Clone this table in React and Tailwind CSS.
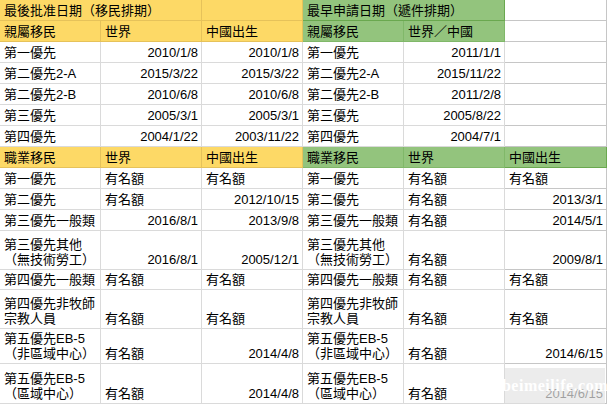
import React from 'react';

const Y = 'bg-[#fdd966]';
const G = 'bg-[#93c47d]';

// each cell: text (string or lines), bg, span
const rows = [
  {
    h: 'h-[21px]',
    cells: [
      { t: '最後批准日期（移民排期）', bg: Y, span: 2 },
      { t: '', bg: Y },
      { t: '最早申請日期（遞件排期）', bg: G, span: 2 },
      { t: '' },
    ],
  },
  {
    h: 'h-[21px]',
    cells: [
      { t: '親屬移民', bg: Y },
      { t: '世界', bg: Y },
      { t: '中國出生', bg: Y },
      { t: '親屬移民', bg: G },
      { t: '世界／中國', bg: G },
      { t: '' },
    ],
  },
  fam('第一優先', '2010/1/8', '2010/1/8', '2011/1/1'),
  fam('第二優先2-A', '2015/3/22', '2015/3/22', '2015/11/22'),
  fam('第二優先2-B', '2010/6/8', '2010/6/8', '2011/2/8'),
  fam('第三優先', '2005/3/1', '2005/3/1', '2005/8/22'),
  fam('第四優先', '2004/1/22', '2003/11/22', '2004/7/1'),
  {
    h: 'h-[21px]',
    cells: [
      { t: '職業移民', bg: Y },
      { t: '世界', bg: Y },
      { t: '中國出生', bg: Y },
      { t: '職業移民', bg: G },
      { t: '世界', bg: G },
      { t: '中國出生', bg: G },
    ],
  },
  job('h-[21px]', '第一優先', '有名額', '有名額', '有名額', '有名額'),
  job('h-[21px]', '第二優先', '有名額', '2012/10/15', '有名額', '2013/3/1'),
  job('h-[21px]', '第三優先一般類', '2016/8/1', '2013/9/8', '有名額', '2014/5/1'),
  job('h-[39px]', ['第三優先其他', '（無技術勞工）'], '2016/8/1', '2005/12/1', '有名額', '2009/8/1'),
  job('h-[20px]', '第四優先一般類', '有名額', '有名額', '有名額', '有名額'),
  job('h-[39px]', ['第四優先非牧師', '宗教人員'], '有名額', '有名額', '有名額', '有名額'),
  job('h-[35px]', ['第五優先EB-5', '（非區域中心）'], '有名額', '2014/4/8', '有名額', '2014/6/15'),
  job('h-[40px]', ['第五優先EB-5', '（區域中心）'], '有名額', '2014/4/8', '有名額', '2014/6/15'),
];

function fam(name, a, b, c) {
  return {
    h: 'h-[21px]',
    cells: [{ t: name }, { t: a }, { t: b }, { t: name }, { t: c }, { t: '' }],
  };
}

function job(h, name, a, b, c, d) {
  return {
    h,
    cells: [{ t: name }, { t: a }, { t: b }, { t: name }, { t: c }, { t: d }],
  };
}

function Cell({ cell, h, last }) {
  const isDate = typeof cell.t === 'string' && /^\d/.test(cell.t);
  const lines = Array.isArray(cell.t) ? cell.t : [cell.t];
  let border = 'border-[#dadada]';
  if (cell.bg === Y) border = 'border-[#e6c25a]';
  if (cell.bg === G) border = last || cell.span === 2 ? 'border-[#6aa84f]' : 'border-[#80b869]';
  if (last && !cell.bg) border = 'border-[#c6c6c6]';
  return (
    <div
      className={`${h} ${cell.bg || 'bg-white'} ${cell.span === 2 ? 'col-span-2' : ''} ${border} border-r border-b flex flex-col justify-end px-[4px] pb-[2px] overflow-hidden whitespace-nowrap ${
        isDate ? 'items-end pr-[3px]' : 'items-start'
      }`}
    >
      {lines.map((l, i) => (
        <span key={i} className="leading-[15px]">
          {l}
        </span>
      ))}
    </div>
  );
}

export default function App() {
  return (
    <div
      className="relative w-[609px] h-[404px] overflow-hidden bg-white text-[13px] text-black"
      style={{ fontFamily: '"Liberation Sans", "Noto Sans CJK TC", sans-serif' }}
    >
      <div className="grid grid-cols-[101px_101px_101px_101px_101px_102px]">
        {rows.map((r, ri) =>
          r.cells.map((c, ci) => (
            <Cell key={`${ri}-${ci}`} cell={c} h={r.h} last={ci === r.cells.length - 1} />
          ))
        )}
      </div>

      {/* watermark */}
      <div className="absolute left-[505px] top-[368px] w-[100px] h-[36px] bg-[#e4e4e4]/70 flex items-center justify-center">
        <span
          className="text-white text-[16px] font-bold tracking-[0.5px]"
          style={{ fontFamily: '"Liberation Serif", serif' }}
        >
          beimeilife.com
        </span>
      </div>
    </div>
  );
}
